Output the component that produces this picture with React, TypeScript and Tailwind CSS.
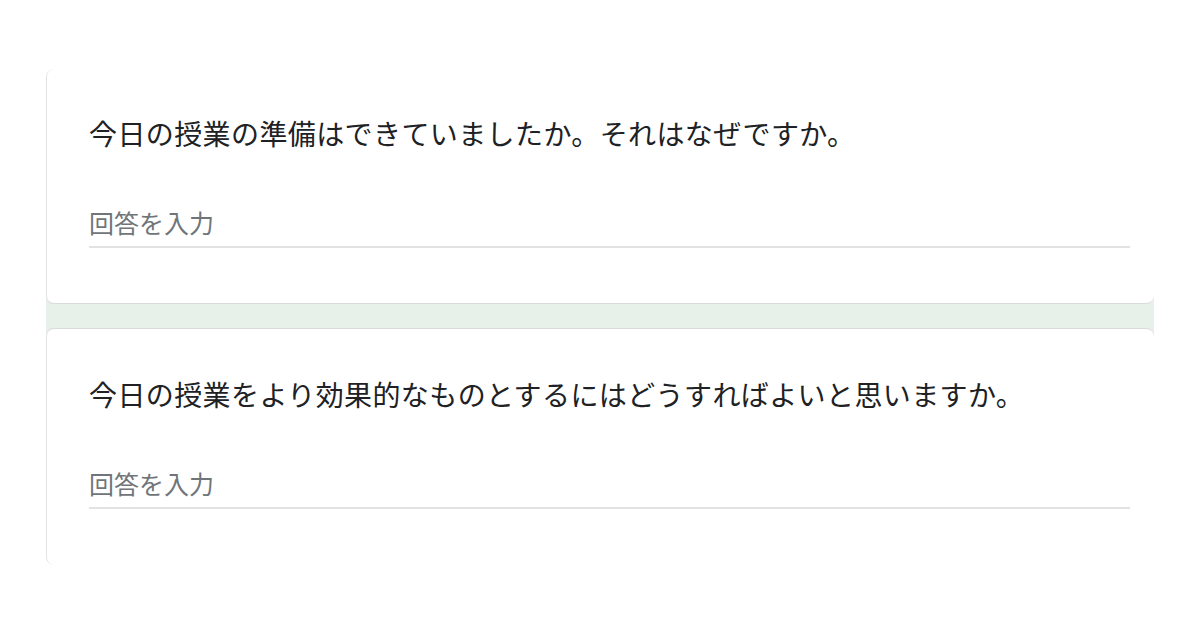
import React from "react";

const questions = [
  "今日の授業の準備はできていましたか。それはなぜですか。",
  "今日の授業をより効果的なものとするにはどうすればよいと思いますか。",
];

function QuestionCard({ title, edge }: { title: string; edge: string }) {
  return (
    <div
      className={`relative z-10 bg-white rounded-lg border-l border-[#e3e3e3] pl-[42px] pr-6 ${edge}`}
    >
      {/* Title */}
      <p className="text-[28px] leading-10 text-[#202124] tracking-[0.4px]">{title}</p>
      {/* Answer field */}
      <div className="mt-[51px] border-b-2 border-[#e2e2e2] pb-[6px]">
        <span className="block text-[25px] leading-9 text-[#70757a]">回答を入力</span>
      </div>
    </div>
  );
}

export default function App() {
  return (
    <div
      className="w-[1200px] h-[630px] bg-white overflow-hidden pt-[69px]"
      style={{ fontFamily: '"Noto Sans CJK JP", "Noto Sans", sans-serif' }}
    >
      <div className="ml-[46px] w-[1108px] flex flex-col">
        <QuestionCard title={questions[0]} edge="border-b border-b-[#d8dbd9] pt-11 pb-[55px]" />
        {/* page background between cards */}
        <div className="h-[40px] -my-2 bg-[#e7f0e9]" />
        <QuestionCard title={questions[1]} edge="border-t border-t-[#d8dbd9] pt-[45px] pb-14" />
      </div>
    </div>
  );
}
